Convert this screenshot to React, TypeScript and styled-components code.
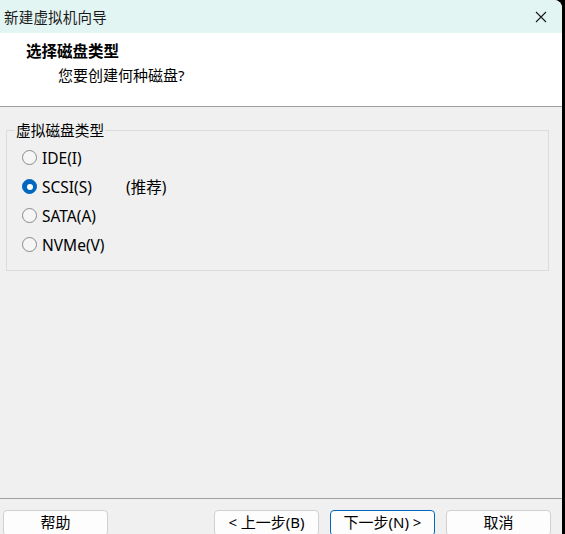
import React, { useState } from "react";
import styled, { createGlobalStyle } from "styled-components";

const Global = createGlobalStyle`
  html, body {
    margin: 0;
    padding: 0;
    background: #000;
    overflow: hidden;
  }
  #root {
    width: 565px;
    height: 534px;
    overflow: hidden;
  }
  * { box-sizing: border-box; }
`;

const FONT = `"Noto Sans", "Noto Sans CJK SC", sans-serif`;

const Window = styled.div`
  width: 562px;
  height: 534px;
  display: flex;
  flex-direction: column;
  background: #f0f0f0;
  border-top-right-radius: 8px;
  overflow: hidden;
  font-family: ${FONT};
  color: #000;
`;

const TitleBar = styled.div`
  height: 33px;
  flex: none;
  display: flex;
  align-items: center;
  justify-content: space-between;
  background: #e2f5f3;
  padding: 0 11px 0 4px;
`;

const TitleText = styled.span`
  font-size: 14.5px;
  color: #1a1a1a;
  letter-spacing: 0.2px;
`;

const CloseButton = styled.button`
  width: 20px;
  height: 20px;
  border: 0;
  padding: 0;
  background: transparent;
  display: flex;
  align-items: center;
  justify-content: center;
`;

const Header = styled.div`
  height: 74px;
  flex: none;
  background: #fff;
  border-bottom: 1px solid #a0a0a0;
  padding: 8px 0 0 26px;
  display: flex;
  flex-direction: column;
  gap: 3px;
`;

const Heading = styled.div`
  font-size: 15.5px;
  font-weight: 700;
  line-height: 21px;
`;

const Subheading = styled.div`
  font-size: 15px;
  line-height: 20px;
  padding-left: 32px;
`;

const Body = styled.div`
  flex: 1;
  padding: 13px 13px 0 6px;
`;

const Group = styled.fieldset`
  margin: 0;
  padding: 3px 0 11px 15px;
  border: 1px solid #dcdcdc;
  display: flex;
  flex-direction: column;
`;

const Legend = styled.legend`
  margin-left: -7px;
  padding: 0 1px;
  font-size: 14.7px;
  line-height: 20px;
`;

const Option = styled.label`
  height: 29px;
  display: flex;
  align-items: center;
  gap: 5px;
  font-size: 15.5px;
  cursor: default;
`;

const Radio = styled.span<{ $checked: boolean }>`
  width: 15px;
  height: 15px;
  flex: none;
  border-radius: 50%;
  display: flex;
  align-items: center;
  justify-content: center;
  background: ${(p) => (p.$checked ? "#0067c0" : "#f6f6f6")};
  border: 1px solid ${(p) => (p.$checked ? "#0067c0" : "#8a8a8a")};
  &::after {
    content: "";
    width: 6px;
    height: 6px;
    border-radius: 50%;
    background: #fff;
    display: ${(p) => (p.$checked ? "block" : "none")};
  }
`;

const OptionName = styled.span`
  min-width: 79px;
`;

const Footer = styled.div`
  flex: none;
  height: 36px;
  border-top: 1px solid #a0a0a0;
  padding: 11px 11px 0 3px;
  display: flex;
  gap: 11px;
`;

const Spacer = styled.div`
  flex: 1;
`;

const Button = styled.button<{ $primary?: boolean }>`
  width: 105px;
  height: 26px;
  flex: none;
  background: #fdfdfd;
  border: 1px solid ${(p) => (p.$primary ? "#0067c0" : "#d0d0d0")};
  border-radius: 4px;
  font-family: ${FONT};
  font-size: 15px;
  color: #000;
  padding: 0 0 2px;
  line-height: 20px;
`;

const options = [
  { id: "ide", label: "IDE(I)" },
  { id: "scsi", label: "SCSI(S)", note: "(推荐)" },
  { id: "sata", label: "SATA(A)" },
  { id: "nvme", label: "NVMe(V)" },
];

export default function App() {
  const [selected, setSelected] = useState("scsi");
  return (
    <>
      <Global />
      <Window>
        <TitleBar>
          <TitleText>新建虚拟机向导</TitleText>
          <CloseButton aria-label="关闭">
            <svg width="12" height="12" viewBox="0 0 12 12">
              <path d="M1 1 L11 11 M11 1 L1 11" stroke="#1a1a1a" strokeWidth="1.1" />
            </svg>
          </CloseButton>
        </TitleBar>
        <Header>
          <Heading>选择磁盘类型</Heading>
          <Subheading>您要创建何种磁盘?</Subheading>
        </Header>
        <Body>
          <Group>
            <Legend>虚拟磁盘类型</Legend>
            {options.map((o) => (
              <Option key={o.id} onClick={() => setSelected(o.id)}>
                <Radio $checked={selected === o.id} />
                <OptionName>{o.label}</OptionName>
                {o.note && <span>{o.note}</span>}
              </Option>
            ))}
          </Group>
        </Body>
        <Footer>
          <Button>帮助</Button>
          <Spacer />
          <Button>&lt; 上一步(B)</Button>
          <Button $primary>下一步(N) &gt;</Button>
          <Button>取消</Button>
        </Footer>
      </Window>
    </>
  );
}
